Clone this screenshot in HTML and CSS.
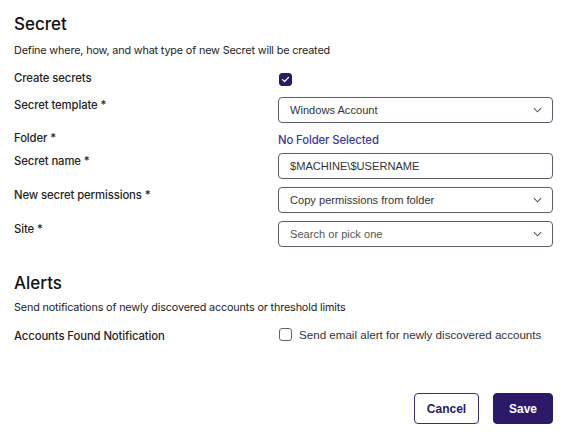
FILE: index.html
```html
<!DOCTYPE html>
<html>
<head>
<meta charset="utf-8">
<link rel="stylesheet" href="styles.css">
</head>
<body>
<div class="page">
  <section class="section">
    <h2 class="title">Secret</h2>
    <p class="desc">Define where, how, and what type of new Secret will be created</p>
    <div class="rows">
      <div class="row r-check">
        <div class="label">Create secrets</div>
        <div class="field"><span class="cb checked"><svg viewBox="0 0 14 14" width="13" height="13"><path d="M3.2 7.2 L5.8 9.6 L10.8 4.4" fill="none" stroke="#fff" stroke-width="1.6" stroke-linecap="round" stroke-linejoin="round"/></svg></span></div>
      </div>
      <div class="row r-input">
        <div class="label">Secret template *</div>
        <div class="field"><div class="select"><span class="val">Windows Account</span><svg class="chev" viewBox="0 0 10 6" width="9" height="6"><path d="M1 1 L5 5 L9 1" fill="none" stroke="#555" stroke-width="1.2"/></svg></div></div>
      </div>
      <div class="row r-folder">
        <div class="label">Folder *</div>
        <div class="field"><span class="link">No Folder Selected</span></div>
      </div>
      <div class="row r-input">
        <div class="label">Secret name *</div>
        <div class="field"><div class="select"><span class="val">$MACHINE\$USERNAME</span></div></div>
      </div>
      <div class="row r-input">
        <div class="label">New secret permissions *</div>
        <div class="field"><div class="select"><span class="val">Copy permissions from folder</span><svg class="chev" viewBox="0 0 10 6" width="9" height="6"><path d="M1 1 L5 5 L9 1" fill="none" stroke="#555" stroke-width="1.2"/></svg></div></div>
      </div>
      <div class="row r-input">
        <div class="label">Site *</div>
        <div class="field"><div class="select"><span class="val ph">Search or pick one</span><svg class="chev" viewBox="0 0 10 6" width="9" height="6"><path d="M1 1 L5 5 L9 1" fill="none" stroke="#555" stroke-width="1.2"/></svg></div></div>
      </div>
    </div>
  </section>
  <section class="section alerts">
    <h2 class="title">Alerts</h2>
    <p class="desc">Send notifications of newly discovered accounts or threshold limits</p>
    <div class="rows">
      <div class="row r-check2">
        <div class="label">Accounts Found Notification</div>
        <div class="field"><label class="cblabel"><span class="cb"></span><span class="cbtext">Send email alert for newly discovered accounts</span></label></div>
      </div>
    </div>
  </section>
  <div class="actions">
    <button class="btn cancel">Cancel</button>
    <button class="btn save">Save</button>
  </div>
</div>
</body>
</html>
```
FILE: styles.css
```css
* { box-sizing: border-box; }
html, body { margin: 0; padding: 0; background: #fff; }
body { font-family: Inter, "Noto Sans", sans-serif; color: #1a1a1a; }
.page { padding: 13px 13px 0 14px; width: 566px; }
.title { margin: 0; font-size: 17px; font-weight: 500; line-height: 22px; color: #111; }
.desc { margin: 9px 0 0; font-size: 10.8px; line-height: 14px; color: #222; letter-spacing: -0.15px; }
.rows { display: flex; flex-direction: column; margin-top: 12px; }
.row { display: flex; }
.label { width: 264px; font-size: 11.3px; font-weight: 500; color: #1f1f1f; line-height: 14px; letter-spacing: -0.1px; }
.field { flex: 1; }
.r-check { height: 27px; }
.r-check .label { padding-top: 1px; }
.r-input { height: 34px; }
.r-input .label { padding-top: 1px; }
.r-folder { height: 25px; margin-top: -3px; }
.r-folder .label { padding-top: 3px; }
.cb { display: inline-flex; align-items: center; justify-content: center; width: 13px; height: 13px; border: 1.3px solid #666; border-radius: 3px; background: #fff; margin-left: 1px; }
.cb.checked { background: #2b1a68; border-color: #2b1a68; }
.select { height: 26px; border: 1px solid #5d5d6a; border-radius: 4px; display: flex; align-items: center; padding: 0 10px 0 11px; font-family: "Liberation Sans", Arial, sans-serif; font-size: 11.1px; color: #333; }
.select .val { flex: 1; }
.select .ph { color: #555; }
.chev { flex: none; }
.link { font-size: 11.3px; font-weight: 500; color: #3a3a9a; display: inline-block; padding-top: 3px; letter-spacing: -0.1px; }
.alerts { margin-top: 17px; }
.alerts .desc { margin-top: 7px; }
.alerts .rows { margin-top: 14px; }
.r-check2 { height: 20px; }
.cblabel { display: flex; align-items: center; gap: 7px; margin-top: -1px; }
.cbtext { font-family: "Liberation Sans", Arial, sans-serif; font-size: 11.6px; color: #333; }
.actions { display: flex; justify-content: flex-end; gap: 14px; margin-top: 44px; }
.btn { height: 31px; border-radius: 4px; font-family: "Liberation Sans", Arial, sans-serif; font-size: 12px; font-weight: 700; padding: 0; }
.cancel { width: 65px; background: #fff; border: 1.3px solid #3b2e7a; color: #2b1a68; }
.save { width: 60px; background: #2b1a68; border: 1px solid #2b1a68; color: #fff; }
```
